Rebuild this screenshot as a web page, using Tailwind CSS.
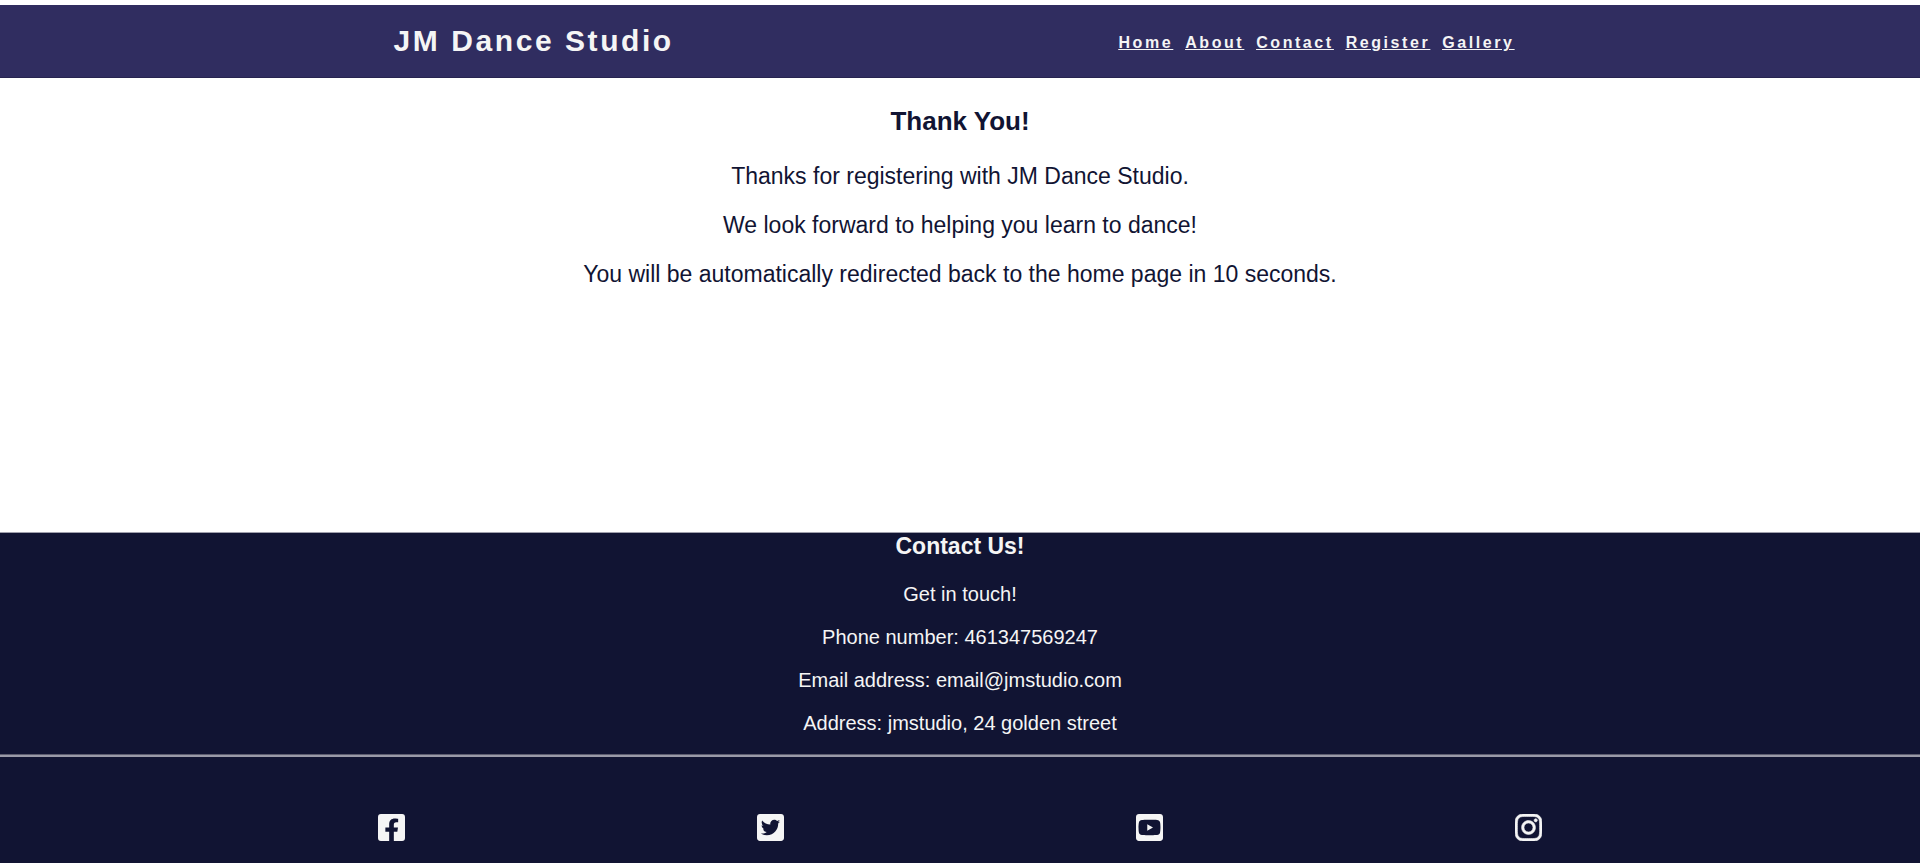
<!DOCTYPE html>
<html lang="en">
<head>
<meta charset="utf-8">
<meta name="viewport" content="width=device-width, initial-scale=1">
<title>JM Dance Studio</title>
<script src="https://cdn.jsdelivr.net/npm/@tailwindcss/browser@4"></script>
</head>
<body class="flex min-h-screen flex-col bg-white pt-[5px] font-['Liberation_Sans',Arial,sans-serif] text-[#111433]">
<header class="border-b border-[#272450] bg-[#302d60] text-[#f5f5f5]">
  <div class="mx-auto flex w-[59%] items-start justify-between pt-[17px] pr-3 pb-[17px]">
    <h1 class="text-[30px] leading-[38px] font-bold tracking-[0.16rem]">JM Dance Studio</h1>
    <nav class="flex gap-3 pt-[9px] text-base leading-6 font-bold tracking-[0.16rem] underline">
      <a href="#home">Home</a>
      <a href="#about">About</a>
      <a href="#contact">Contact</a>
      <a href="#register">Register</a>
      <a href="#gallery">Gallery</a>
    </nav>
  </div>
</header>
<main class="flex grow flex-col items-center pt-[27px] text-center text-[23px] leading-[27px]">
  <h2 class="mb-[26px] text-[26px] leading-8 font-bold">Thank You!</h2>
  <p class="mb-[22px]">Thanks for registering with JM Dance Studio.</p>
  <p class="mb-[22px]">We look forward to helping you learn to dance!</p>
  <p>You will be automatically redirected back to the home page in 10 seconds.</p>
</main>
<footer id="contact" class="border-t border-[#a0a0ad] bg-[#111433] text-center text-xl leading-[23px] text-[#f5f5f5]">
  <h3 class="mb-[23px] text-[23px] leading-[27px] font-bold">Contact Us!</h3>
  <div class="flex flex-col gap-5">
    <p>Get in touch!</p>
    <p>Phone number: 461347569247</p>
    <p>Email address: email@jmstudio.com</p>
    <p>Address: jmstudio, 24 golden street</p>
  </div>
  <hr class="mt-[19px] h-[3px] border-t border-t-[#5d5d70] bg-[#9a9aa8]">
  <div class="mx-auto grid w-[79%] grid-cols-4 justify-items-center pt-[57px] pb-[22px]">
    <a href="#facebook" aria-label="Facebook"><svg class="h-[27px] w-[27px]" viewBox="0 32 448 448" fill="currentColor"><path d="M400 32H48A48 48 0 0 0 0 80v352a48 48 0 0 0 48 48h137.250V327.690h-63V256h63v-54.640c0-62.150 37-96.480 93.670-96.480 27.140 0 55.520 4.840 55.520 4.840v61h-31.270c-30.810 0-40.420 19.120-40.420 38.730V256h68.780l-11 71.690h-57.780V480H400a48 48 0 0 0 48-48V80a48 48 0 0 0-48-48z"/></svg></a>
    <a href="#twitter" aria-label="Twitter"><svg class="h-[27px] w-[27px]" viewBox="0 32 448 448" fill="currentColor"><path d="M400 32H48C21.500 32 0 53.500 0 80v352c0 26.500 21.500 48 48 48h352c26.500 0 48-21.500 48-48V80c0-26.500-21.500-48-48-48zm-48.900 158.800c.2 2.800.2 5.700.2 8.500 0 86.700-66 186.600-186.600 186.600-37.200 0-71.700-10.800-100.700-29.400 5.300.6 10.400.8 15.800.8 30.700 0 58.900-10.400 81.400-28-28.800-.6-53-19.500-61.300-45.500 10.100 1.500 19.200 1.500 29.600-1.200-30-6.100-52.500-32.500-52.500-64.400v-.8c8.700 4.900 18.900 7.900 29.600 8.300a65.447 65.447 0 0 1-29.200-54.600c0-12.200 3.200-23.400 8.900-33.100 32.300 39.800 80.800 65.800 135.200 68.600-9.300-44.500 24-80.600 64-80.600 18.900 0 35.900 7.900 47.900 20.700 14.800-2.800 29-8.300 41.600-15.800-4.900 15.200-15.200 28-28.800 36.100 13.200-1.400 26-5.100 37.800-10.200-8.900 13.100-20.100 24.700-32.900 34z"/></svg></a>
    <a href="#youtube" aria-label="YouTube"><svg class="h-[27px] w-[27px]" viewBox="0 32 448 448" fill="currentColor"><path d="M186.800 202.100l95.200 54.100-95.200 54.100V202.100zM448 80v352c0 26.500-21.500 48-48 48H48c-26.500 0-48-21.500-48-48V80c0-26.500 21.500-48 48-48h352c26.500 0 48 21.500 48 48zm-42 176.300s0-59.600-7.600-88.200c-4.200-15.800-16.500-28.200-32.200-32.400C337.900 128 224 128 224 128s-113.900 0-142.200 7.700c-15.700 4.200-28 16.600-32.200 32.400-7.600 28.500-7.600 88.200-7.600 88.200s0 59.600 7.600 88.200c4.200 15.800 16.500 27.700 32.200 31.900C110.100 384 224 384 224 384s113.900 0 142.200-7.700c15.700-4.200 28-16.100 32.200-31.900 7.600-28.500 7.600-88.100 7.600-88.100z"/></svg></a>
    <a href="#instagram" aria-label="Instagram"><svg class="h-[27px] w-[27px]" viewBox="0 32 448 448" fill="currentColor" stroke="currentColor" stroke-width="10"><path d="M224.100 141c-63.600 0-114.900 51.300-114.900 114.900s51.300 114.900 114.900 114.900S339 319.500 339 255.900 287.700 141 224.100 141zm0 189.600c-41.100 0-74.700-33.500-74.700-74.700s33.500-74.700 74.700-74.700 74.700 33.500 74.700 74.700-33.600 74.700-74.700 74.700zm146.400-194.300c0 14.900-12 26.800-26.800 26.800-14.900 0-26.800-12-26.800-26.800s12-26.800 26.800-26.800 26.800 12 26.800 26.800zm76.100 27.200c-1.700-35.900-9.900-67.700-36.200-93.900-26.200-26.200-58-34.400-93.900-36.200-37-2.100-147.900-2.100-184.900 0-35.800 1.700-67.600 9.900-93.900 36.100s-34.400 58-36.200 93.900c-2.100 37-2.100 147.900 0 184.900 1.700 35.900 9.900 67.700 36.200 93.900s58 34.400 93.900 36.200c37 2.100 147.900 2.100 184.900 0 35.900-1.700 67.700-9.900 93.900-36.200 26.200-26.200 34.400-58 36.200-93.900 2.100-37 2.100-147.800 0-184.800zM398.800 388c-7.800 19.600-22.900 34.700-42.600 42.600-29.500 11.700-99.500 9-132.100 9s-102.700 2.600-132.100-9c-19.600-7.800-34.700-22.900-42.600-42.600-11.700-29.500-9-99.500-9-132.100s-2.600-102.700 9-132.100c7.800-19.600 22.900-34.700 42.600-42.600 29.500-11.700 99.500-9 132.100-9s102.700-2.600 132.100 9c19.600 7.800 34.700 22.900 42.600 42.600 11.700 29.500 9 99.500 9 132.100s2.700 102.700-9 132.100z"/></svg></a>
  </div>
</footer>
</body>
</html>
